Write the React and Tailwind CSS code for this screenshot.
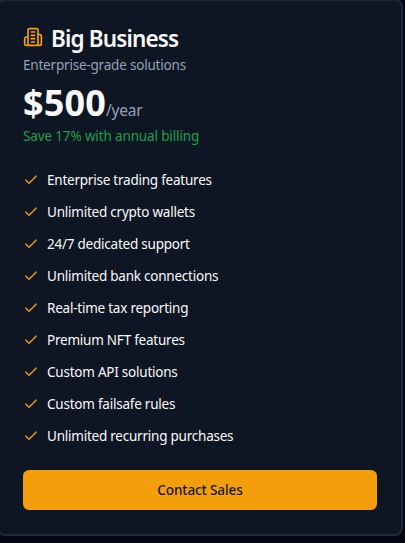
import { Check } from "lucide-react";

const features = [
  "Enterprise trading features",
  "Unlimited crypto wallets",
  "24/7 dedicated support",
  "Unlimited bank connections",
  "Real-time tax reporting",
  "Premium NFT features",
  "Custom API solutions",
  "Custom failsafe rules",
  "Unlimited recurring purchases",
];

function BuildingIcon({ className }) {
  return (
    <svg viewBox="0 0 24 24" fill="none" stroke="currentColor" strokeWidth="2" strokeLinecap="round" strokeLinejoin="round" className={className}>
      <path d="M6 22V4a2 2 0 0 1 2-2h8a2 2 0 0 1 2 2v18Z" />
      <path d="M6 12H4a2 2 0 0 0-2 2v6a2 2 0 0 0 2 2h2" />
      <path d="M18 9h2a2 2 0 0 1 2 2v9a2 2 0 0 1-2 2h-2" />
      <path d="M10 6h4M10 10h4M10 14h4M10 18h4" />
    </svg>
  );
}

export default function App() {
  return (
    <div className="h-[543px] w-[405px] overflow-hidden bg-[#030711] font-['Noto_Sans',sans-serif]">
      <div className="-ml-[3px] -mt-px h-[537px] w-[406px] rounded-lg border-2 border-[#1e293b] bg-[#0e1523] px-6 pt-6 text-[#f8fafc]">
        <h3 className="flex h-6 items-center gap-2 text-[22.5px] font-semibold tracking-[-0.85px]">
          <BuildingIcon className="size-5 text-[#f59e0b]" />
          <span className="pt-1">Big Business</span>
        </h3>
        <p className="mt-1.5 text-[13.5px] leading-5 tracking-[-0.2px] text-[#94a3b8]">Enterprise-grade solutions</p>
        <div className="mt-2 flex h-10 items-baseline">
          <span className="text-4xl font-bold tracking-[0.15px]">$500</span>
          <span className="text-[15.5px] tracking-[-0.2px] text-[#94a3b8]">/year</span>
        </div>
        <p className="mt-[3px] text-[13.5px] leading-5 tracking-[-0.14px] text-[#16a34a]">Save 17% with annual billing</p>
        <ul className="mt-6 flex flex-col gap-3">
          {features.map((f) => (
            <li key={f} className="flex h-5 items-center gap-2 text-[13.5px] tracking-[-0.23px]">
              <Check className="size-4 text-[#f59e0b]" />
              <span>{f}</span>
            </li>
          ))}
        </ul>
        <button className="mt-6 h-10 w-full rounded-md bg-[#f59e0b] text-[13.5px] font-medium tracking-[-0.1px] text-[#0f172a]">Contact Sales</button>
      </div>
    </div>
  );
}
